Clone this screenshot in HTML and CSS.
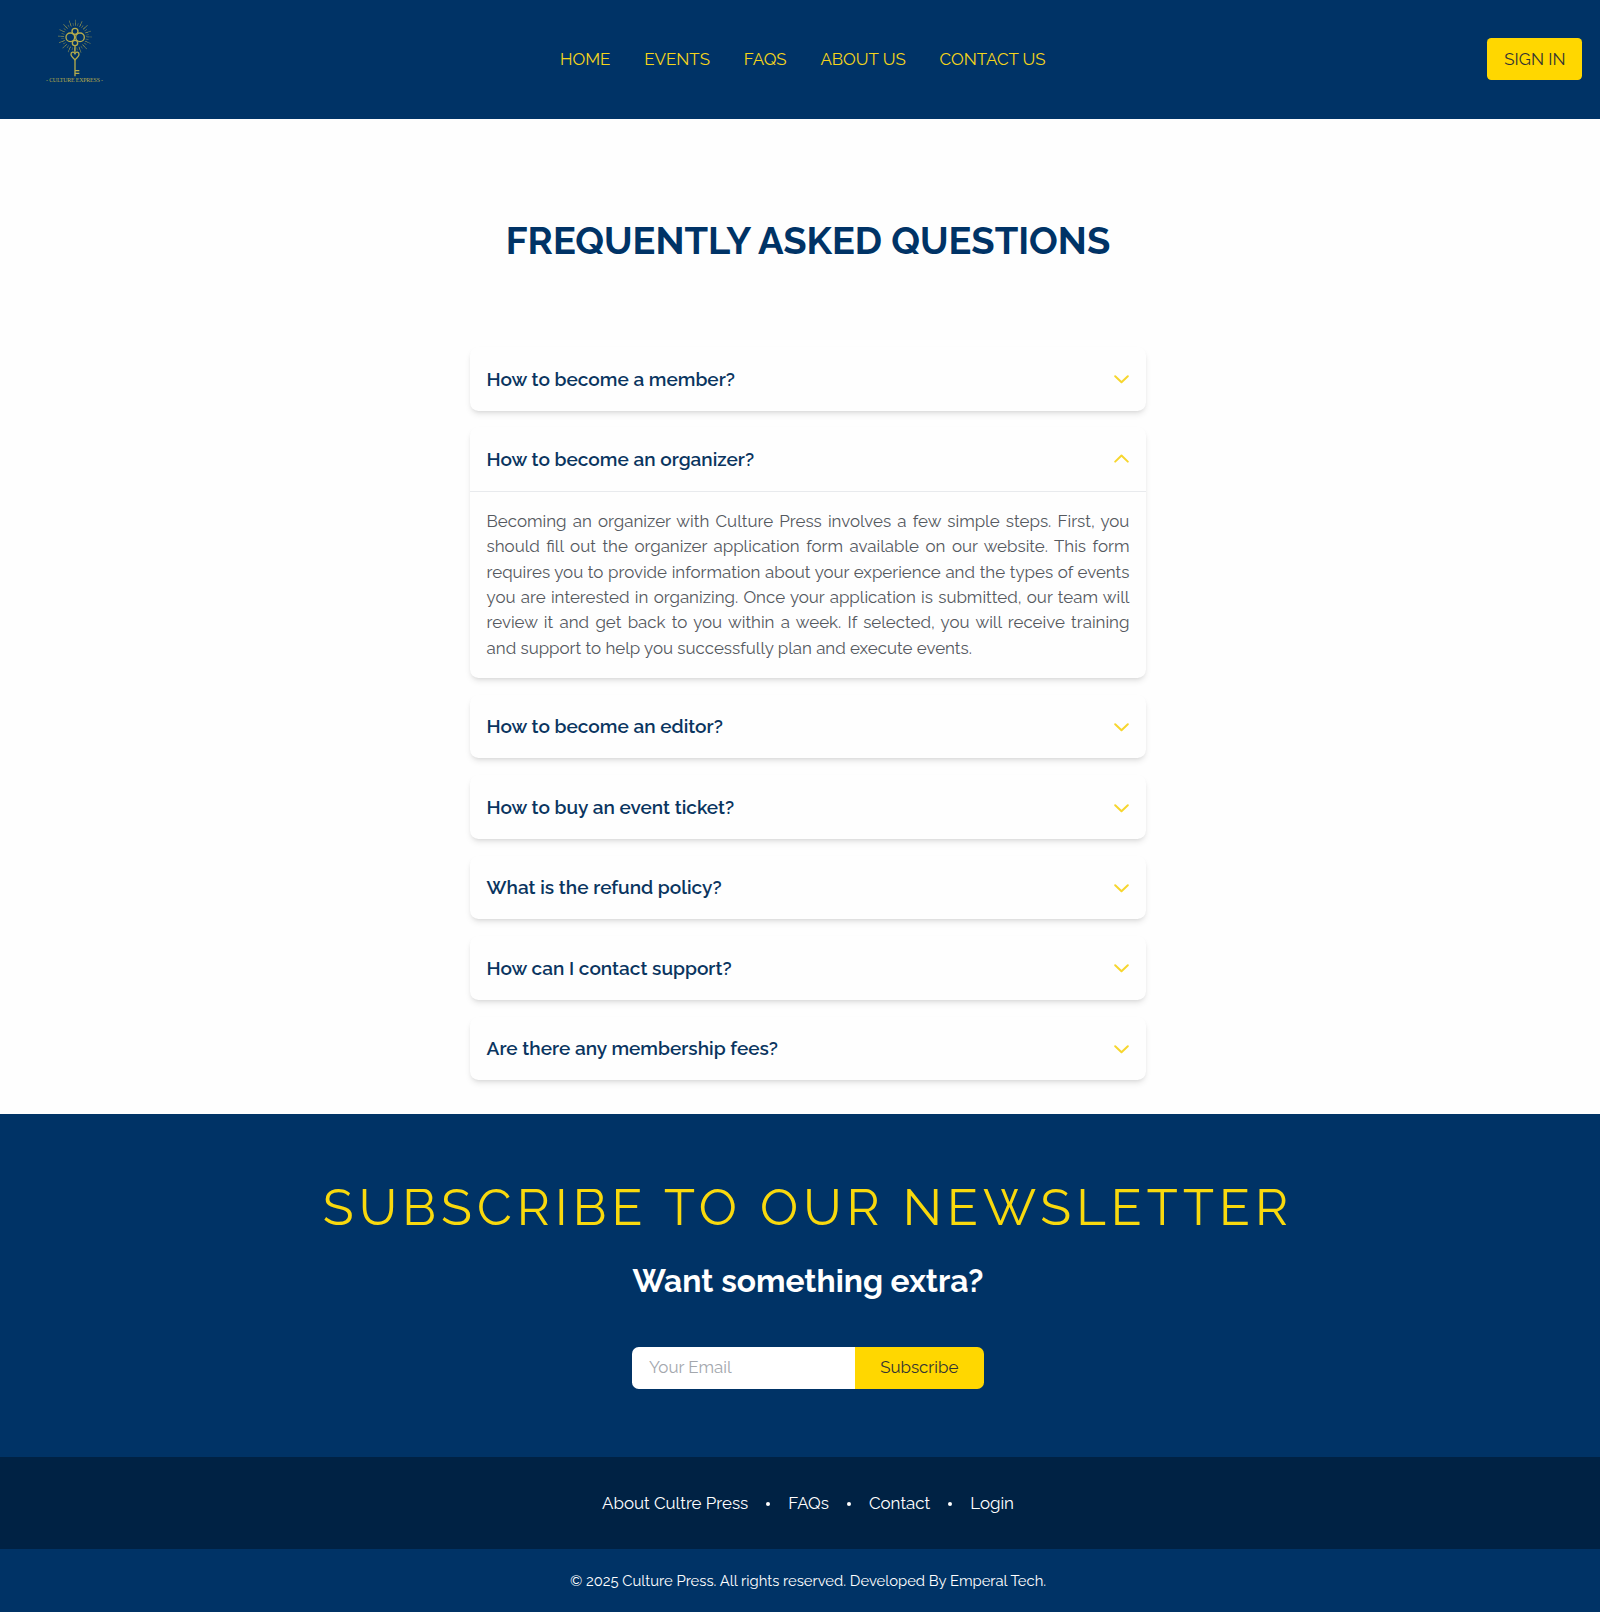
FILE: index.html
```html
<!DOCTYPE html>
<html lang="en">
<head>
<meta charset="utf-8">
<title>Culture Press - FAQs</title>
<link rel="stylesheet" href="styles.css">
</head>
<body>
<header class="header">
  <a class="logo" href="#" aria-label="Culture Express">
    <svg viewBox="0 0 270 270" fill="none" stroke="#b5ac4c">
      <circle cx="135" cy="80" r="37" stroke-width="9" stroke-dasharray=".2 .8" pathLength="32" opacity=".7"/>
      <circle cx="135" cy="80" r="42" stroke-width="18" stroke-dasharray=".1 .9" pathLength="16" opacity=".7"/>
      <g stroke-width="4">
        <circle cx="135" cy="64" r="9"/>
        <circle cx="121" cy="82" r="13"/>
        <circle cx="150" cy="82" r="13"/>
        <circle cx="135" cy="99" r="8"/>
        <path d="M135 107v18M135 149v50M135 182h13M135 190h13"/>
        <path d="M135 149c-7-6-12-10-12-16 0-8 9-9 12-2 3-7 12-6 12 2 0 6-5 10-12 16z"/>
      </g>
      <text class="logo-text" x="48" y="217" textLength="171">- CULTURE EXPRESS -</text>
    </svg>
  </a>
  <nav class="nav">
    <a href="#">HOME</a>
    <a href="#">EVENTS</a>
    <a href="#">FAQS</a>
    <a href="#">ABOUT US</a>
    <a href="#">CONTACT US</a>
  </nav>
  <a class="sign-in" href="#">SIGN IN</a>
</header>

<main class="faq">
  <h1 class="faq-title">FREQUENTLY ASKED QUESTIONS</h1>
  <div class="faq-list">
    <section class="item">
      <h2 class="question">How to become a member? <svg class="chevron" viewBox="0 0 15 11"><path d="M1.2 3.2 7.5 9.3 13.8 3.2"/></svg></h2>
    </section>
    <section class="item">
      <h2 class="question">How to become an organizer? <svg class="chevron" viewBox="0 0 15 11"><path d="M1.2 7.6 7.5 1.5 13.8 7.6"/></svg></h2>
      <p class="answer">Becoming an organizer with Culture Press involves a few simple steps. First, you should fill out the organizer application form available on our website. This form requires you to provide information about your experience and the types of events you are interested in organizing. Once your application is submitted, our team will review it and get back to you within a week. If selected, you will receive training and support to help you successfully plan and execute events.</p>
    </section>
    <section class="item">
      <h2 class="question">How to become an editor? <svg class="chevron" viewBox="0 0 15 11"><path d="M1.2 3.2 7.5 9.3 13.8 3.2"/></svg></h2>
    </section>
    <section class="item">
      <h2 class="question">How to buy an event ticket? <svg class="chevron" viewBox="0 0 15 11"><path d="M1.2 3.2 7.5 9.3 13.8 3.2"/></svg></h2>
    </section>
    <section class="item">
      <h2 class="question">What is the refund policy? <svg class="chevron" viewBox="0 0 15 11"><path d="M1.2 3.2 7.5 9.3 13.8 3.2"/></svg></h2>
    </section>
    <section class="item">
      <h2 class="question">How can I contact support? <svg class="chevron" viewBox="0 0 15 11"><path d="M1.2 3.2 7.5 9.3 13.8 3.2"/></svg></h2>
    </section>
    <section class="item">
      <h2 class="question">Are there any membership fees? <svg class="chevron" viewBox="0 0 15 11"><path d="M1.2 3.2 7.5 9.3 13.8 3.2"/></svg></h2>
    </section>
  </div>
</main>

<footer class="footer">
  <section class="newsletter">
    <h2 class="newsletter-title">SUBSCRIBE TO OUR NEWSLETTER</h2>
    <p class="newsletter-sub">Want something extra?</p>
    <form class="form">
      <input class="email" type="email" placeholder="Your Email" aria-label="Your Email">
      <button class="subscribe" type="button">Subscribe</button>
    </form>
  </section>
  <nav class="links">
    <a href="#">About Cultre Press</a><span class="dot"></span>
    <a href="#">FAQs</a><span class="dot"></span>
    <a href="#">Contact</a><span class="dot"></span>
    <a href="#">Login</a>
  </nav>
  <p class="copyright">© 2025 Culture Press. All rights reserved. Developed By Emperal Tech.</p>
</footer>
</body>
</html>
```
FILE: styles.css
```css
* {
  box-sizing: border-box;
  margin: 0;
}

html {
  font-size: 16.917px;
}

body {
  font-family: Raleway, Lato, sans-serif;
  line-height: 1.5;
  color: #333;
  background: #fefefe;
}

a {
  color: inherit;
  text-decoration: none;
}

.header {
  display: grid;
  grid-template-columns: 1fr auto 1fr;
  align-items: center;
  height: 118.5px;
  padding: 0 17.6px 0 1rem;
  background: #003366;
}

.logo {
  width: 90px;
  height: 90px;
  margin: -9px 0 0 13px;
}

.logo svg {
  display: block;
  width: 90px;
  height: 90px;
}

.logo-text {
  font-family: "Liberation Serif", serif;
  font-size: 17.5px;
  fill: #b5ac4c;
  stroke: none;
}

.nav {
  display: flex;
  gap: 2rem;
  padding-left: 6.4px;
  color: #f5d51a;
}

.sign-in {
  justify-self: end;
  padding: 0.5rem 1rem;
  border-radius: 0.25rem;
  background: #ffd700;
}

.faq {
  display: flex;
  flex-direction: column;
  align-items: center;
  gap: 84.8px;
  padding: 101.5px 0 33.8px 16px;
}

.faq-title {
  font-size: 2.25rem;
  line-height: 1.1111;
  font-weight: 700;
  color: #003366;
}

.faq-list {
  display: flex;
  flex-direction: column;
  gap: 1rem;
  width: 40rem;
}

.item {
  border-radius: 0.5rem;
  background: #fefefe;
  box-shadow: 0 4px 6px -1px rgba(0, 0, 0, 0.1), 0 2px 4px -2px rgba(0, 0, 0, 0.1);
}

.question {
  display: flex;
  justify-content: space-between;
  align-items: center;
  height: 63.5px;
  padding: 0 1rem;
  font-size: 1.125rem;
  font-weight: 600;
  color: #0a3560;
}

.chevron {
  width: 15px;
  height: 11px;
  fill: none;
  stroke: #f7d62e;
  stroke-width: 2;
  stroke-linecap: round;
  stroke-linejoin: round;
}

.answer {
  padding: 1rem;
  border-top: 1px solid #e8eaed;
  text-align: justify;
  color: #55595f;
}

.footer {
  text-align: center;
  color: #fff;
  background: #003366;
}

.newsletter {
  display: flex;
  flex-direction: column;
  align-items: center;
  height: 343px;
  padding: 67.7px 0 0 16px;
}

.newsletter-title {
  font-size: 3rem;
  font-weight: 400;
  line-height: 1;
  letter-spacing: 0.1em;
  color: #f9d90d;
}

.newsletter-sub {
  margin-top: 30px;
  font-size: 1.875rem;
  font-weight: 700;
  line-height: 1.2;
}

.form {
  display: flex;
  width: 352px;
  height: 42.5px;
  margin-top: 46.4px;
  border-radius: 0.4rem;
  overflow: hidden;
}

.email {
  flex: 1;
  min-width: 0;
  padding: 0 1rem;
  border: 0;
  font: inherit;
  background: #fff;
}

.email::placeholder {
  color: #a3a7ad;
}

.subscribe {
  width: 129.5px;
  padding: 0;
  border: 0;
  font: inherit;
  color: #333;
  background: #ffd700;
}

.links {
  display: flex;
  justify-content: center;
  align-items: center;
  gap: 18px;
  height: 92.5px;
  padding: 1px 0 0 16px;
  background: #002244;
}

.dot {
  width: 4px;
  height: 4px;
  border-radius: 50%;
  background: #fff;
}

.copyright {
  height: 62.7px;
  padding: 20.5px 0 0 16px;
  font-size: 0.875rem;
}
```
